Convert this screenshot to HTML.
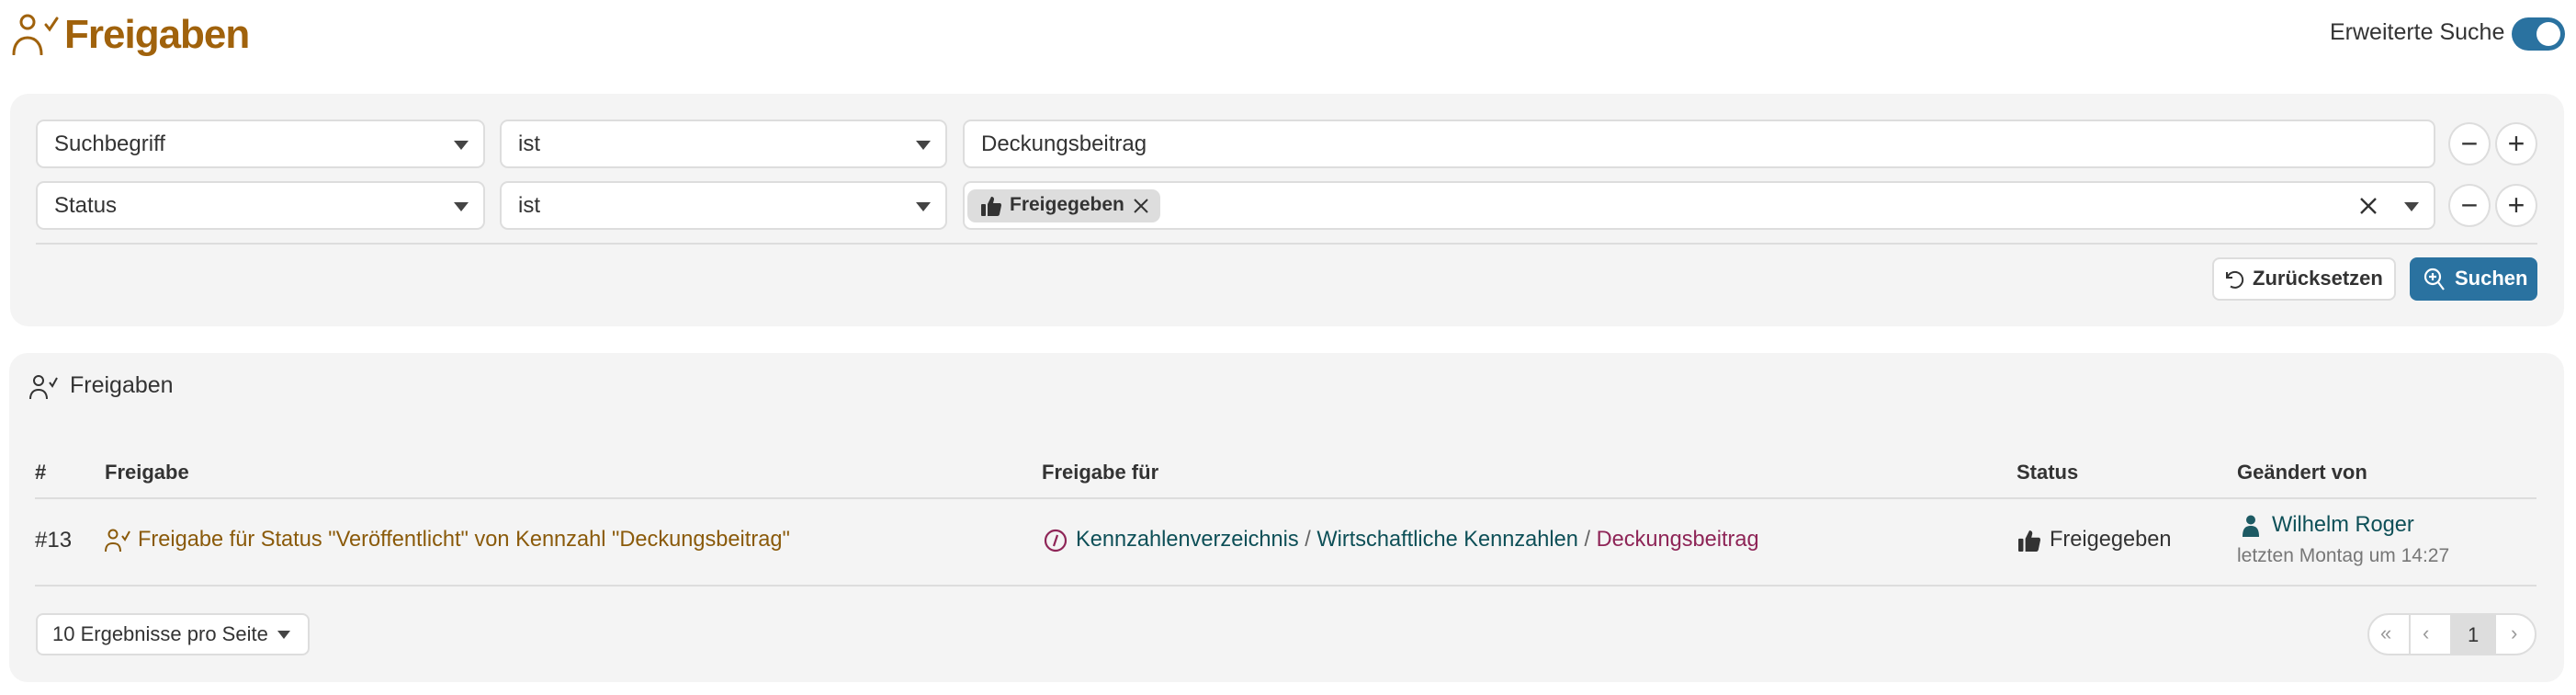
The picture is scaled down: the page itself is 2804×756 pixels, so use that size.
<!DOCTYPE html>
<html><head><meta charset="utf-8"><style>
*{box-sizing:border-box;margin:0;padding:0}
body{width:2804px;height:756px;background:#fff;font-family:"Liberation Sans",sans-serif;color:#333;position:relative;overflow:hidden}
.a{position:absolute}
.panel{position:absolute;background:#f4f4f4;border-radius:20px}
.inp{position:absolute;background:#fff;border:2px solid #ddd;border-radius:9px;height:53px;font-size:24px;line-height:49px;padding-left:18px;color:#333}
.car{position:absolute;right:16px;top:21px;width:0;height:0;border-left:8px solid transparent;border-right:8px solid transparent;border-top:10px solid #444}
.circ{position:absolute;width:46px;height:47px;border:2px solid #ddd;border-radius:50%;background:#fff;text-align:center;line-height:42px;font-size:32px;color:#333}
.t{position:absolute;white-space:nowrap}
.line{position:absolute;height:2px;background:#ddd}
</style></head><body>
<svg class="a" style="left:12px;top:14px" width="54" height="46" viewBox="0 0 54 46" fill="none" stroke="#a0620c" stroke-width="3" stroke-linecap="round"><circle cx="18" cy="10" r="7"/><path d="M3 45 C3 34 9 27 18 27 C27 27 33 34 33 45"/><path d="M38 13 L42 18 L50 6"/></svg>
<div class="t" style="left:70px;top:13px;font-size:44px;font-weight:bold;color:#a0620c;letter-spacing:-1px">Freigaben</div>
<div class="t" style="left:2536px;top:21px;font-size:25px;color:#333">Erweiterte Suche</div>
<div class="a" style="left:2734px;top:19px;width:58px;height:36px;border-radius:18px;background:#2a72a0"></div>
<div class="a" style="left:2761px;top:24px;width:26px;height:26px;border-radius:50%;background:#fff"></div>

<div class="panel" style="left:11px;top:102px;width:2780px;height:253px"></div>
<div class="inp" style="left:39px;top:130px;width:489px">Suchbegriff<div class="car"></div></div>
<div class="inp" style="left:544px;top:130px;width:487px">ist<div class="car"></div></div>
<div class="inp" style="left:1048px;top:130px;width:1603px">Deckungsbeitrag</div>
<div class="inp" style="left:39px;top:197px;width:489px">Status<div class="car"></div></div>
<div class="inp" style="left:544px;top:197px;width:487px">ist<div class="car"></div></div>
<div class="inp" style="left:1048px;top:197px;width:1603px"><div class="car"></div>
 <svg class="a" style="right:61px;top:15px" width="20" height="20" viewBox="0 0 20 20" stroke="#333" stroke-width="2.4"><path d="M2 2 L18 18 M18 2 L2 18"/></svg></div>
<div class="a" style="left:1053px;top:206px;width:210px;height:36px;background:#ddd;border-radius:9px"></div>
<svg class="a" style="left:1068px;top:213px" width="22" height="22" viewBox="0 0 22 22" fill="#333"><rect x="0" y="9" width="5" height="13" rx="1"/><path d="M7 9 L11 1 C13 1 14 2 14 4 L13 8 L20 8 C21.5 8 22 9 22 10.5 L20 20 C19.5 21.5 19 22 17 22 L7 22 Z"/></svg>
<div class="t" style="left:1099px;top:211px;font-size:21px;font-weight:bold;color:#333">Freigegeben</div>
<svg class="a" style="left:1234px;top:216px" width="16" height="16" viewBox="0 0 16 16" stroke="#333" stroke-width="2"><path d="M1 1 L15 15 M15 1 L1 15"/></svg>
<div class="circ" style="left:2665px;top:133px">−</div>
<div class="circ" style="left:2716px;top:133px">+</div>
<div class="circ" style="left:2665px;top:200px">−</div>
<div class="circ" style="left:2716px;top:200px">+</div>
<div class="line" style="left:39px;top:264px;width:2723px"></div>
<div class="a" style="left:2408px;top:280px;width:200px;height:47px;background:#fff;border:2px solid #ddd;border-radius:8px"></div>
<svg class="a" style="left:2420px;top:292px" width="24" height="24" viewBox="0 0 24 24" fill="none" stroke="#333" stroke-width="2"><path d="M4 4 L4 10 L10 10"/><path d="M4.5 10 A8.5 8.5 0 1 1 8 19.5"/></svg>
<div class="t" style="left:2452px;top:290px;font-size:22px;font-weight:bold;color:#333">Zurücksetzen</div>
<div class="a" style="left:2623px;top:280px;width:139px;height:47px;background:#2a72a0;border-radius:8px"></div>
<svg class="a" style="left:2637px;top:290px" width="26" height="28" viewBox="0 0 26 28" fill="none" stroke="#fff" stroke-width="2.2"><circle cx="11" cy="11" r="8"/><path d="M17 17 L23 25"/><path d="M11 7 V15 M7 11 H15"/></svg>
<div class="t" style="left:2672px;top:290px;font-size:22px;font-weight:bold;color:#fff">Suchen</div>

<div class="panel" style="left:10px;top:384px;width:2781px;height:358px"></div>
<svg class="a" style="left:32px;top:407px" width="32" height="28" viewBox="0 0 32 28" fill="none" stroke="#333" stroke-width="2"><circle cx="10" cy="7" r="5"/><path d="M1 27 C1 20 5 17 10 17 C15 17 19 20 19 27"/><path d="M22 9 L25 13 L30 4"/></svg>
<div class="t" style="left:76px;top:405px;font-size:25px;color:#333">Freigaben</div>
<div class="t" style="left:38px;top:501px;font-size:22px;font-weight:bold;color:#333">#</div>
<div class="t" style="left:114px;top:501px;font-size:22px;font-weight:bold;color:#333">Freigabe</div>
<div class="t" style="left:1134px;top:501px;font-size:22px;font-weight:bold;color:#333">Freigabe für</div>
<div class="t" style="left:2195px;top:501px;font-size:22px;font-weight:bold;color:#333">Status</div>
<div class="t" style="left:2435px;top:501px;font-size:22px;font-weight:bold;color:#333">Geändert von</div>
<div class="line" style="left:38px;top:541px;width:2723px"></div>
<div class="t" style="left:38px;top:574px;font-size:24px;color:#333">#13</div>
<svg class="a" style="left:114px;top:575px" width="28" height="26" viewBox="0 0 28 26" fill="none" stroke="#8a5a0a" stroke-width="2"><circle cx="9" cy="6" r="4.5"/><path d="M1 25 C1 18 4 16 9 16 C14 16 17 18 17 25"/><path d="M19 8 L22 12 L27 3"/></svg>
<div class="t" style="left:150px;top:574px;font-size:23.6px;color:#8a5a0a">Freigabe für Status "Veröffentlicht" von Kennzahl "Deckungsbeitrag"</div>
<svg class="a" style="left:1136px;top:575px" width="26" height="26" viewBox="0 0 26 26" fill="none" stroke="#8e2557" stroke-width="2.2"><circle cx="13" cy="13" r="11"/><path d="M15 7 L11 19"/></svg>
<div class="t" style="left:1171px;top:574px;font-size:23.6px;color:#0d4f57">Kennzahlenverzeichnis <span style="color:#666">/</span> Wirtschaftliche Kennzahlen <span style="color:#666">/</span> <span style="color:#8e2557">Deckungsbeitrag</span></div>
<svg class="a" style="left:2197px;top:576px" width="24" height="24" viewBox="0 0 22 22" fill="#333"><rect x="0" y="9" width="5" height="13" rx="1"/><path d="M7 9 L11 1 C13 1 14 2 14 4 L13 8 L20 8 C21.5 8 22 9 22 10.5 L20 20 C19.5 21.5 19 22 17 22 L7 22 Z"/></svg>
<div class="t" style="left:2231px;top:574px;font-size:23.6px;color:#333">Freigegeben</div>
<svg class="a" style="left:2440px;top:560px" width="20" height="24" viewBox="0 0 20 24" fill="#1d5a63"><circle cx="10" cy="5.5" r="5"/><path d="M1 24 C1 15 4 12 10 12 C16 12 19 15 19 24 Z"/></svg>
<div class="t" style="left:2473px;top:558px;font-size:23.6px;color:#0d4f57">Wilhelm Roger</div>
<div class="t" style="left:2435px;top:593px;font-size:21px;color:#777">letzten Montag um 14:27</div>
<div class="line" style="left:38px;top:636px;width:2723px"></div>
<div class="a" style="left:39px;top:667px;width:298px;height:46px;background:#fff;border:2px solid #ddd;border-radius:8px"></div>
<div class="t" style="left:57px;top:677px;font-size:22px;color:#333">10 Ergebnisse pro Seite</div>
<div class="a" style="left:302px;top:686px;border-left:7px solid transparent;border-right:7px solid transparent;border-top:9px solid #444"></div>
<div class="a" style="left:2577px;top:667px;width:184px;height:46px;background:#fff;border:2px solid #ddd;border-radius:23px;overflow:hidden">
 <div class="a" style="left:43px;top:0;width:2px;height:44px;background:#ddd"></div>
 <div class="a" style="left:88px;top:0;width:50px;height:44px;background:#ddd"></div>
 <div class="t" style="left:12px;top:7px;font-size:22px;color:#999">«</div>
 <div class="t" style="left:58px;top:7px;font-size:22px;color:#999">‹</div>
 <div class="t" style="left:107px;top:9px;font-size:22px;color:#333">1</div>
 <div class="t" style="left:154px;top:7px;font-size:22px;color:#999">›</div>
</div>
</body></html>
